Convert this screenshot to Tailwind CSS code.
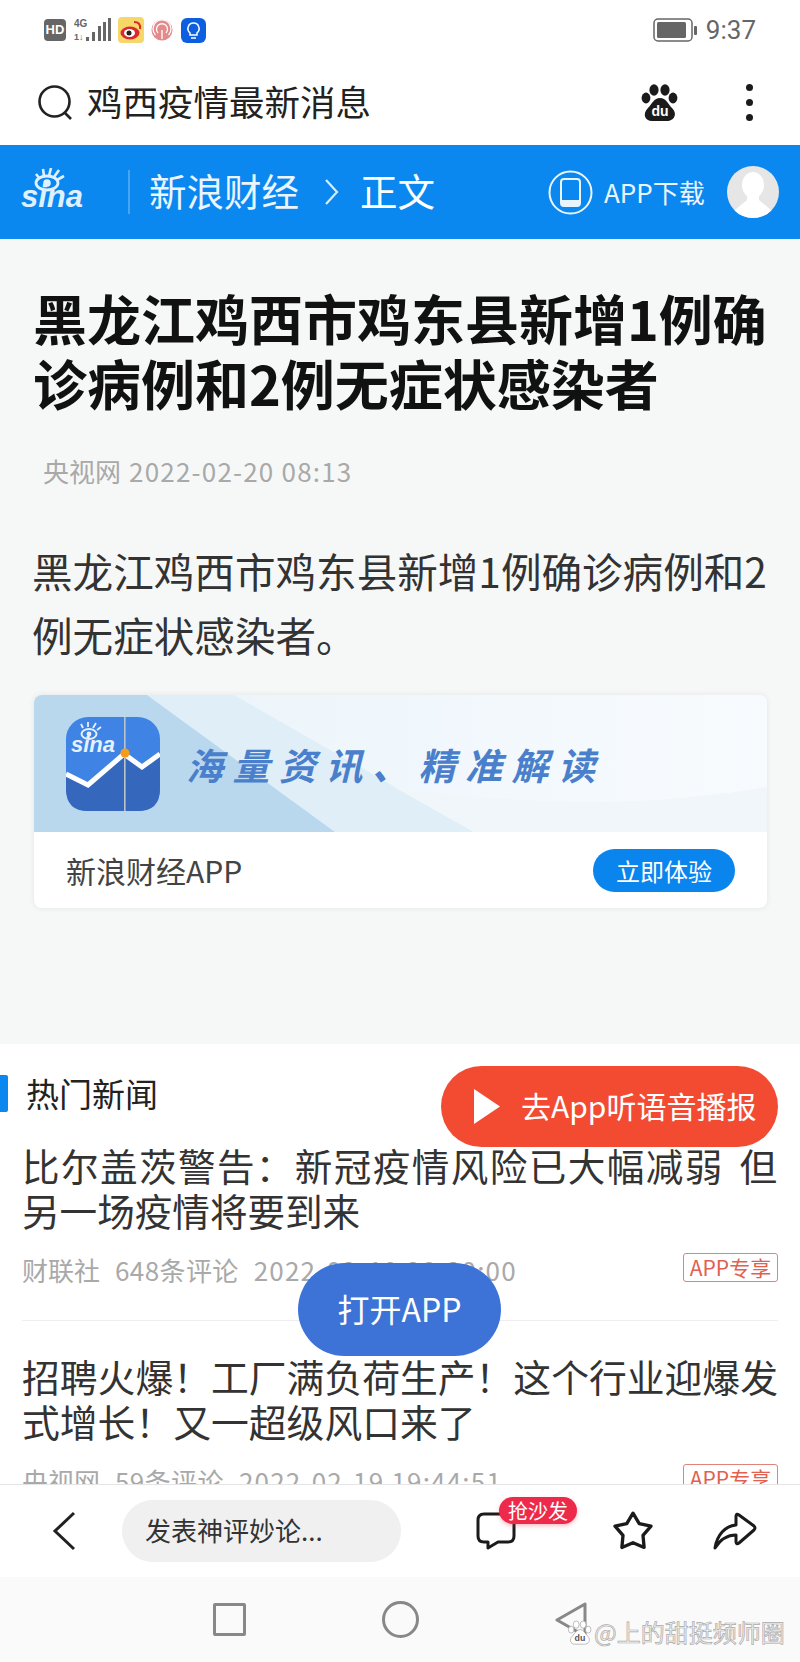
<!DOCTYPE html>
<html lang="zh-CN">
<head>
    <meta charset="UTF-8">
    <meta name="viewport" content="width=device-width, initial-scale=1.0">
    <title>新浪财经</title>
    <script src="https://cdn.jsdelivr.net/npm/@tailwindcss/browser@4"></script>
</head>
<body class="bg-white">
<div class="relative w-[800px] h-[1662px] overflow-hidden flex flex-col bg-white font-['Noto_Sans_CJK_SC','Noto_Sans',sans-serif]">

    <!-- Status bar -->
    <div class="h-[60px] shrink-0 flex items-center pl-[44px] pr-[44px]">
        <div class="w-[22px] h-[22px] rounded-[4px] bg-[#666] text-white text-[13px] font-bold leading-[22px] text-center font-['Liberation_Sans',sans-serif]">HD</div>
        <svg class="ml-[8px]" width="37" height="24" viewBox="0 0 37 24">
            <text x="0" y="9" font-family="Liberation Sans" font-weight="700" font-size="10" fill="#666">4G</text>
            <text x="0" y="22" font-family="Liberation Sans" font-weight="700" font-size="9" fill="#666">1↓</text>
            <rect x="12" y="19" width="3" height="4" fill="#666"/><rect x="18" y="14" width="3" height="9" fill="#666"/><rect x="24" y="8" width="3" height="15" fill="#666"/><rect x="29" y="4" width="3" height="19" fill="#666"/><rect x="34" y="0" width="3" height="23" fill="#666"/>
        </svg>
        <svg class="ml-[7px]" width="26" height="26" viewBox="0 0 26 26">
            <rect width="26" height="26" rx="4" fill="#f5d76a"/>
            <ellipse cx="12" cy="16" rx="9.5" ry="6.5" fill="#d9292c"/>
            <ellipse cx="11.5" cy="16" rx="5.5" ry="4" fill="#fff"/>
            <circle cx="11" cy="16" r="2.5" fill="#222"/>
            <path d="M16 5 Q23 5 22 12" fill="none" stroke="#d9292c" stroke-width="2"/>
        </svg>
        <svg class="ml-[7px]" width="22" height="22" viewBox="0 0 22 22">
            <circle cx="11" cy="11" r="10.5" fill="#e58a8a"/>
            <path d="M11 20 V11 M7 14 A5.5 5.5 0 1 1 15 14 M4.5 16 A9 9 0 1 1 17.5 16" fill="none" stroke="#fff" stroke-width="1.3"/>
        </svg>
        <svg class="ml-[8px]" width="25" height="25" viewBox="0 0 25 25">
            <rect width="25" height="25" rx="6" fill="#0d5fe0"/>
            <path d="M12.5 5 A5.5 5.5 0 0 1 16 14.8 V17 H9 V14.8 A5.5 5.5 0 0 1 12.5 5 Z M10 20 H15" fill="none" stroke="#fff" stroke-width="1.5"/>
        </svg>
        <svg class="ml-auto" width="44" height="24" viewBox="0 0 44 24">
            <rect x="1" y="1" width="38" height="22" rx="4" fill="none" stroke="#666" stroke-width="1.5"/>
            <rect x="4" y="4" width="29" height="16" rx="1.5" fill="#666"/>
            <rect x="41" y="8" width="3" height="9" rx="1" fill="#666"/>
        </svg>
        <div class="ml-[9px] text-[26px] leading-[30px] text-[#666] font-['Roboto',sans-serif]">9:37</div>
    </div>

    <!-- Search bar -->
    <div class="h-[85px] shrink-0 flex items-center pl-[37px]">
        <svg width="37" height="37" viewBox="0 0 37 37">
            <circle cx="17.5" cy="17.5" r="15" fill="none" stroke="#222" stroke-width="2.6"/>
            <path d="M28 29 L34 35" stroke="#222" stroke-width="2.6"/>
        </svg>
        <div class="ml-[13px] mb-[4px] text-[35.5px] leading-[44px] text-[#222] w-[300px] whitespace-nowrap">鸡西疫情最新消息</div>
        <svg class="ml-[254px]" width="38" height="39" viewBox="0 0 38 39">
            <ellipse cx="13" cy="7" rx="4.6" ry="5.8" fill="#1b1b1b"/>
            <ellipse cx="24" cy="7" rx="4.6" ry="5.8" fill="#1b1b1b"/>
            <ellipse cx="5" cy="15" rx="4.4" ry="5.4" fill="#1b1b1b"/>
            <ellipse cx="32" cy="15" rx="4.4" ry="5.4" fill="#1b1b1b"/>
            <path d="M19 15 C25 15 27 21 31 25 C37 31 33 38 26 38 H11 C4 38 1 31 7 25 C11 21 13 15 19 15 Z" fill="#1b1b1b"/>
            <text x="19" y="33" text-anchor="middle" font-family="Liberation Sans" font-weight="700" font-size="14" fill="#fff">du</text>
        </svg>
        <div class="ml-[67px] flex flex-col gap-[8px]">
            <div class="w-[7px] h-[7px] rounded-full bg-[#1b1b1b]"></div>
            <div class="w-[7px] h-[7px] rounded-full bg-[#1b1b1b]"></div>
            <div class="w-[7px] h-[7px] rounded-full bg-[#1b1b1b]"></div>
        </div>
    </div>

    <!-- Site header -->
    <div class="h-[94px] shrink-0 bg-[#0a88f0] flex items-center text-white pl-[21px]">
        <svg width="64" height="48" viewBox="0 0 64 48">
            <path d="M15 6 L19 11 M22 1 L23 8 M30 0 L28 8 M38 2 L33 9 M43 8 L36 12" stroke="#dff0ff" stroke-width="2.6"/>
            <ellipse cx="26" cy="15" rx="11" ry="7" fill="none" stroke="#dff0ff" stroke-width="2.8"/>
            <circle cx="26" cy="15" r="3.8" fill="#dff0ff"/>
            <text x="0" y="39" font-family="Liberation Sans" font-style="italic" font-weight="700" font-size="31" fill="#dff0ff">sina</text>
        </svg>
        <div class="ml-[43px] w-[2px] h-[44px] bg-white/25"></div>
        <div class="ml-[19px] mb-[4px] text-[37.5px] leading-[46px] text-[#eaf5ff] whitespace-nowrap w-[152px]">新浪财经</div>
        <svg class="ml-[23px]" width="15" height="28" viewBox="0 0 15 28">
            <path d="M2 2 L13 14 L2 26" fill="none" stroke="#d6ecff" stroke-width="2.2"/>
        </svg>
        <div class="ml-[21px] mb-[4px] text-[37.5px] leading-[46px] w-[76px] whitespace-nowrap">正文</div>
        <svg class="ml-[112px]" width="45" height="45" viewBox="0 0 45 45">
            <circle cx="22.5" cy="22.5" r="21" fill="none" stroke="#e8f5ff" stroke-width="2"/>
            <rect x="13" y="9" width="19" height="27" rx="3" fill="none" stroke="#e8f5ff" stroke-width="2"/>
            <path d="M13 30 H32 V33 Q32 36 29 36 H16 Q13 36 13 33 Z" fill="#e8f5ff"/>
        </svg>
        <div class="ml-[11px] text-[26px] leading-[34px] w-[103px] whitespace-nowrap text-[#eaf5ff]">APP下载</div>
        <div class="ml-[20px] w-[52px] h-[52px] rounded-full bg-[#e6e6e6] overflow-hidden">
            <svg width="52" height="52" viewBox="0 0 52 52">
                <ellipse cx="26" cy="19" rx="11" ry="13" fill="#fff"/>
                <path d="M20 28 V34 L8 44 V52 H44 V44 L32 34 V28 Z" fill="#fff"/>
            </svg>
        </div>
    </div>

    <!-- Article -->
    <div class="h-[805px] shrink-0 bg-[#f6f8f8] px-[33px] pt-[46px]">
        <h1 class="text-[54px] leading-[65px] font-bold text-[#111] w-[740px]">黑龙江鸡西市鸡东县新增1例确诊病例和2例无症状感染者</h1>
        <div class="mt-[38px] ml-[10px] text-[26px] leading-[36px] text-[#a9a9a9] flex gap-[8px]"><span>央视网</span><span class="tracking-[1.2px]">2022-02-20 08:13</span></div>
        <p class="mt-[50px] -ml-[1px] text-[40.6px] leading-[64px] text-[#333] w-[745px]">黑龙江鸡西市鸡东县新增1例确诊病例和2例无症状感染者。</p>

        <!-- App promo card -->
        <div class="mt-[28px] ml-[1px] w-[733px] h-[213px] rounded-[8px] bg-white overflow-hidden shadow-[0_0_6px_rgba(0,0,0,0.08)]">
            <div class="relative h-[137px] bg-[linear-gradient(90deg,#e8f3fa,#f8fbfe)] flex items-center pl-[32px]">
                <svg class="absolute inset-0" width="733" height="137" viewBox="0 0 733 137">
                    <path d="M113 0 H200 L440 137 H301 Z" fill="#e0eef7"/>
                    <path d="M0 0 H113 L301 137 H0 Z" fill="#b9d8ee"/>
                    <path d="M440 137 L360 92 Q560 122 733 92 V137 Z" fill="#f1f6fb"/>
                </svg>
                <svg class="relative" width="94" height="94" viewBox="0 0 94 94">
                    <rect width="94" height="94" rx="22" fill="#3f84e5"/>
                    <path d="M0 60 L22 70 L58 37 L76 50 L94 37 V72 Q94 94 72 94 H22 Q0 94 0 72 Z" fill="#3568bd"/>
                    <path d="M0 57 L22 68 L58 37 L76 50 L94 37" fill="none" stroke="#fff" stroke-width="5"/>
                    <rect x="58" y="0" width="1.6" height="94" fill="#b9c3c9"/>
                    <circle cx="59" cy="36" r="4.6" fill="#f59c1a"/>
                    <ellipse cx="23" cy="17" rx="7.5" ry="5" fill="none" stroke="#e6f1ff" stroke-width="2"/>
                    <circle cx="23" cy="17" r="2.4" fill="#e6f1ff"/>
                    <path d="M17 11 L15 7 M22 10 L22 5 M27 11 L30 6 M31 13 L35 10" stroke="#e6f1ff" stroke-width="1.8"/>
                    <text x="5" y="35" font-family="Liberation Sans" font-style="italic" font-weight="700" font-size="22" fill="#e6f1ff">sina</text>
                </svg>
                <div class="relative ml-[26px] text-[37px] leading-[46px] font-bold italic tracking-[9.5px] text-[#4a80cb] whitespace-nowrap">海量资讯、精准解读</div>
            </div>
            <div class="h-[76px] flex items-center justify-between pl-[32px] pr-[32px]">
                <div class="text-[30px] leading-[40px] text-[#444]">新浪财经APP</div>
                <div class="w-[142px] h-[43px] rounded-full bg-[#0b85ee] text-white text-[24px] leading-[43px] text-center">立即体验</div>
            </div>
        </div>
    </div>

    <!-- Hot news -->
    <div class="flex-1 min-h-0 overflow-hidden bg-white pt-[31px]">
        <div class="flex items-center h-[37px]">
            <div class="w-[8px] h-[37px] rounded-r-[2px] bg-[#0a88f0]"></div>
            <div class="ml-[18px] text-[33px] leading-[37px] text-[#222]">热门新闻</div>
        </div>
        <div class="mt-[30px] mx-[22px] pb-[33px] border-b border-[#eeeeee]">
            <div class="text-[37.6px] leading-[45px] text-[#333] w-[760px] [word-spacing:6px]"><span class="tracking-[1.4px]">比尔盖茨警告&#xFF1A;新冠疫情风险已大幅减弱 但</span>另一场疫情将要到来</div>
            <div class="mt-[21px] flex justify-between items-start">
                <div class="text-[26px] leading-[34px] text-[#a9a9a9] whitespace-nowrap flex gap-[15px]"><span>财联社</span><span class="tracking-[0.4px]">648条评论</span><span class="tracking-[1.2px]">2022-02-19 20:30:00</span></div>
                <div class="w-[95px] h-[29px] rounded-[3px] border border-[#e08378] text-[#e2604f] text-[21px] leading-[26px] text-center whitespace-nowrap">APP专享</div>
            </div>
        </div>
        <div class="mt-[32px] mx-[22px]">
            <div class="text-[37.8px] leading-[45px] text-[#333] w-[760px]">招聘火爆&#xFF01;工厂满负荷生产&#xFF01;这个行业迎爆发式增长&#xFF01;又一超级风口来了</div>
            <div class="mt-[21px] flex justify-between items-start">
                <div class="text-[26px] leading-[34px] text-[#a9a9a9] whitespace-nowrap flex gap-[15px]"><span>央视网</span><span class="tracking-[0.4px]">59条评论</span><span class="tracking-[1.2px]">2022-02-19 19:44:51</span></div>
                <div class="w-[95px] h-[29px] rounded-[3px] border border-[#e08378] text-[#e2604f] text-[21px] leading-[26px] text-center whitespace-nowrap">APP专享</div>
            </div>
        </div>
    </div>

    <!-- Comment toolbar -->
    <div class="relative h-[93px] shrink-0 bg-white border-t border-[#e5e5e5] flex items-center">
        <svg class="ml-[52px]" width="24" height="40" viewBox="0 0 24 40">
            <path d="M22 2 L3 20 L22 38" fill="none" stroke="#222" stroke-width="3"/>
        </svg>
        <div class="ml-[46px] w-[279px] h-[62px] rounded-full bg-[#f0f0f0] pl-[23px] text-[26px] leading-[60px] text-[#333]">发表神评妙论...</div>
        <svg class="ml-[75px]" width="40" height="38" viewBox="0 0 40 38">
            <path d="M8 2 H32 Q38 2 38 8 V24 Q38 30 32 30 H22 L12 36 V30 H8 Q2 30 2 24 V8 Q2 2 8 2 Z" fill="none" stroke="#1b1b1b" stroke-width="3" stroke-linejoin="round"/>
        </svg>
        <svg class="ml-[97px]" width="40" height="40" viewBox="2 1 36 36">
            <path d="M20 3 L25.6 12.3 L36.2 14.7 L29 22.9 L30 33.8 L20 29.5 L10 33.8 L11 22.9 L3.8 14.7 L14.4 12.3 Z" fill="none" stroke="#1b1b1b" stroke-width="3" stroke-linejoin="round"/>
        </svg>
        <svg class="ml-[60px]" width="44" height="40" viewBox="0 0 44 40">
            <path d="M2 37 C4 24 12 15 23 14 L23 5 Q23.5 2 26 4 L41 15 Q43 17 41 19 L26 32 Q23.5 34 23 31 L23 24 C14 24 7 29 2 37 Z" fill="none" stroke="#1b1b1b" stroke-width="3" stroke-linejoin="round"/>
        </svg>
        <div class="absolute left-[499px] top-[12px] w-[78px] h-[27px] rounded-full bg-[#ee2a4a] text-white text-[20px] leading-[27px] text-center shadow-[0_2px_4px_rgba(238,42,74,0.3)]">抢沙发</div>
    </div>

    <!-- Android nav bar -->
    <div class="relative h-[85px] shrink-0 bg-[#fafafa] flex items-center">
        <div class="ml-[213px] w-[33px] h-[33px] rounded-[2px] border-[3px] border-[#888]"></div>
        <div class="ml-[136px] w-[37px] h-[37px] rounded-full border-[3px] border-[#888]"></div>
        <svg class="ml-[135px]" width="34" height="36" viewBox="0 0 34 36">
            <path d="M31 2 V34 L3 18 Z" fill="none" stroke="#888" stroke-width="3" stroke-linejoin="round"/>
        </svg>
        <!-- watermark -->
        <div class="absolute left-[568px] top-[41px] flex items-center gap-[2px]">
            <svg width="24" height="25" viewBox="0 0 38 39">
                <ellipse cx="13" cy="7" rx="4.6" ry="5.8" fill="#fff" stroke="#999"/>
                <ellipse cx="24" cy="7" rx="4.6" ry="5.8" fill="#fff" stroke="#999"/>
                <ellipse cx="5" cy="15" rx="4.4" ry="5.4" fill="#fff" stroke="#999"/>
                <ellipse cx="32" cy="15" rx="4.4" ry="5.4" fill="#fff" stroke="#999"/>
                <path d="M19 15 C25 15 27 21 31 25 C37 31 33 38 26 38 H11 C4 38 1 31 7 25 C11 21 13 15 19 15 Z" fill="#fff" stroke="#999"/>
                <text x="19" y="33" text-anchor="middle" font-family="Liberation Sans" font-weight="700" font-size="14" fill="#555">du</text>
            </svg>
            <div class="text-[24px] leading-[28px] text-[#f4f4f4] [-webkit-text-stroke:0.7px_#aaa] whitespace-nowrap">@上的甜挺频师圈</div>
        </div>
    </div>

    <!-- Floating buttons -->
    <div class="absolute left-[441px] top-[1066px] w-[337px] h-[81px] rounded-full bg-[#f34b32] flex items-center pl-[33px]">
        <svg width="26" height="35" viewBox="0 0 26 35"><path d="M0 0 L26 17.5 L0 35 Z" fill="#fff"/></svg>
        <div class="ml-[21px] mb-[4px] text-[30px] leading-[40px] text-white whitespace-nowrap">去App听语音播报</div>
    </div>
    <div class="absolute left-[298px] top-[1263px] w-[203px] h-[93px] rounded-full bg-[#3d72d7] text-white text-[32px] leading-[90px] text-center">打开APP</div>
</div>
</body>
</html>
